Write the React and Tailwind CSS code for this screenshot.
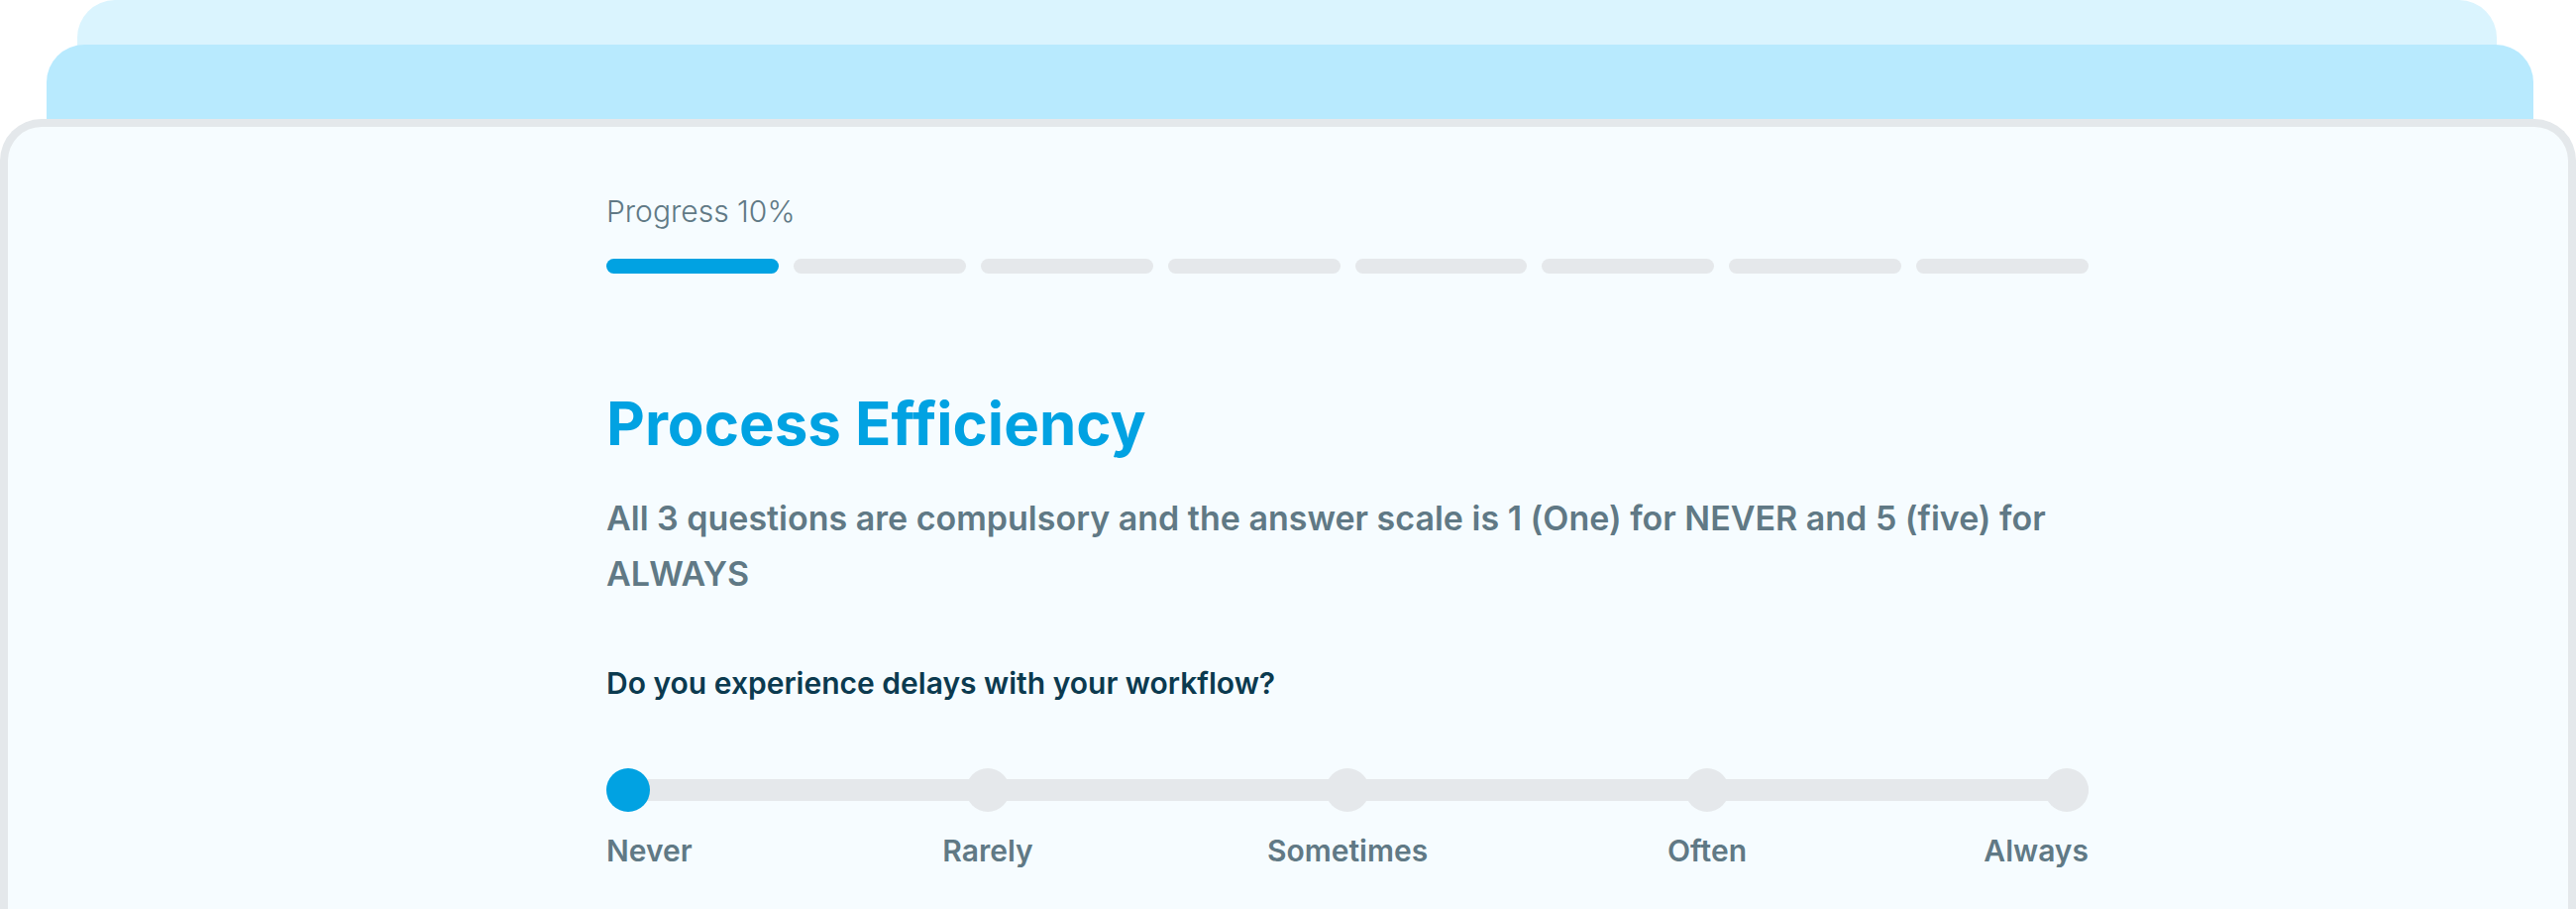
const steps = [1, 2, 3, 4, 5, 6, 7, 8];
const options = ["Never", "Rarely", "Sometimes", "Often", "Always"];

function ProgressBar({ active }) {
  return (
    <div className="flex w-full gap-[15px]">
      {steps.map((s) => (
        <div
          key={s}
          className={
            s <= active
              ? "h-[15px] flex-1 rounded-full bg-[#01a2e2]"
              : "h-[15px] flex-1 rounded-full bg-[#e5e8eb]"
          }
        />
      ))}
    </div>
  );
}

function Scale({ value }) {
  return (
    <div className="mt-[68px]">
      <div className="relative h-[44px]">
        <div className="absolute inset-x-0 top-[11px] h-[22px] rounded-full bg-[#e5e8eb]" />
        <div className="relative flex h-full items-center justify-between">
          {options.map((o, i) => (
            <div
              key={o}
              className={
                i === value
                  ? "h-[44px] w-[44px] rounded-full bg-[#01a2e2]"
                  : "h-[44px] w-[44px] rounded-full bg-[#e5e8eb]"
              }
            />
          ))}
        </div>
      </div>
      <div className="mt-[21px] flex justify-between">
        {options.map((o, i) => (
          <div
            key={o}
            className={
              i === 0
                ? "flex w-[44px] justify-start"
                : i === options.length - 1
                ? "flex w-[44px] justify-end"
                : "flex w-[44px] justify-center"
            }
          >
            <span className="whitespace-nowrap text-[30px] font-semibold leading-[36px] text-[#607985]">
              {o}
            </span>
          </div>
        ))}
      </div>
    </div>
  );
}

export default function App() {
  return (
    <div
      className="flex h-[917px] w-[2600px] flex-col overflow-hidden bg-white"
      style={{ fontFamily: "Inter, 'Noto Sans', sans-serif" }}
    >
      <div className="ml-[78px] mr-[80px] h-[100px] shrink-0 rounded-t-[38px] bg-[#daf4fe]" />
      <div className="relative -mt-[55px] ml-[47px] mr-[43px] h-[110px] shrink-0 rounded-t-[38px] bg-[#b8eafe]" />
      <div className="relative -mt-[35px] flex-1 rounded-t-[42px] border-8 border-b-0 border-[#e4e8eb] bg-[#f6fcff] pl-[604px] pt-[67px]">
        <div className="w-[1496px]">
          <p className="text-[30px] font-light leading-[36px] text-[#607985]">Progress 10%</p>
          <div className="mt-[30px]">
            <ProgressBar active={1} />
          </div>

          <h1 className="mt-[115px] text-[60px] font-bold leading-[72px] text-[#01a2e2]">
            Process Efficiency
          </h1>
          <p className="mt-[32px] text-[34px] font-semibold leading-[56px] text-[#607985]">
            All 3 questions are compulsory and the answer scale is 1 (One) for NEVER and 5 (five) for ALWAYS
          </p>

          <h2 className="mt-[64px] text-[30px] font-semibold leading-[36px] text-[#0b3a4f]">
            Do you experience delays with your workflow?
          </h2>

          <Scale value={0} />
        </div>
      </div>
    </div>
  );
}
